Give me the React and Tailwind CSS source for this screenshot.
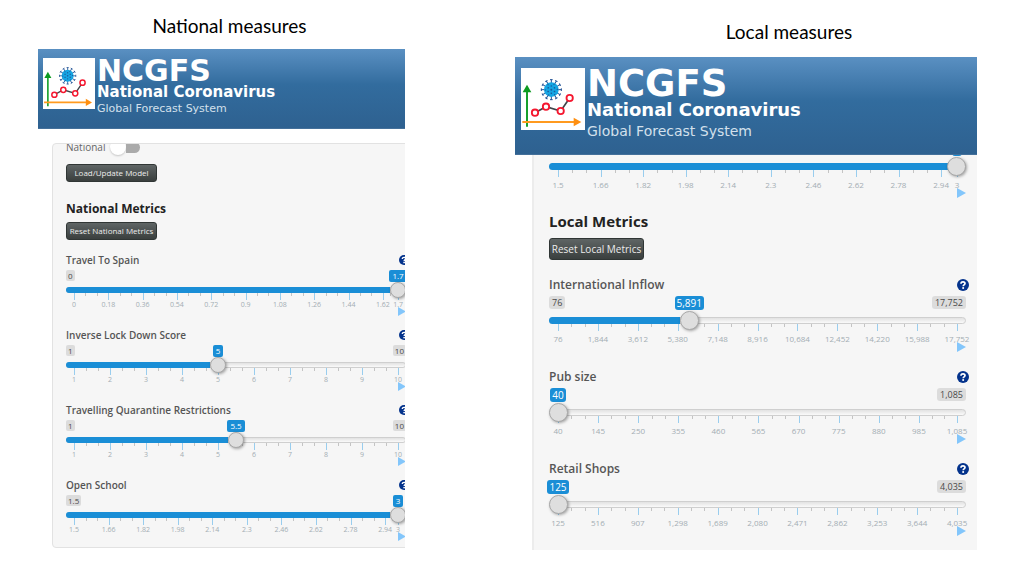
import { useId, useState } from "react";

const SIZES = {
  sm: {
    titleRow: "pt-[14px] pb-[11px]",
    header: "h-[80px] pt-[9px] pl-[5px]",
    logo: "h-[51px] w-[52px]",
    brandGap: "pt-px pl-[2px]",
    brand: "text-[30px] leading-[24px]",
    brand2: "text-[15px] leading-[18px]",
    brand3: "text-[11px] leading-[16px]",
    heading: "text-[12px] leading-[18px]",
    button: "h-[18px] w-[91px] text-[8px]",
    label: "text-[10px] leading-[16px]",
    help: "h-[10px] w-[10px]",
    bubbles: "mt-[2px] h-[12px]",
    bubble: "h-[11px] px-[2px] text-[8px] leading-[11px] rounded-[2px]",
    value: "h-[12px] px-[3px] text-[8px] leading-[12px] rounded-[2px]",
    rail: "h-[16px]",
    track: "h-[6px]",
    inset: "px-[8px]",
    fillInset: "pr-[16px]",
    thumb:
      "[&::-webkit-slider-thumb]:h-[16px] [&::-webkit-slider-thumb]:w-[16px]",
    scale: "-mt-[5px]",
    major: "h-[7px]",
    minor: "h-[3px]",
    tickText: "text-[7px] leading-[10px]",
    play: "-mt-[3px] h-[9px] w-[8px]",
  },
  lg: {
    titleRow: "pt-[20px] pb-[13px]",
    header: "h-[98px] pt-[11px] pl-[6px]",
    logo: "h-[62px] w-[64px]",
    brandGap: "pt-px pl-[2px]",
    brand: "text-[37px] leading-[30px]",
    brand2: "text-[18px] leading-[22px]",
    brand3: "text-[14px] leading-[20px]",
    heading: "text-[15px] leading-[20px]",
    button: "h-[22px] w-[95px] text-[10px]",
    label: "text-[12px] leading-[18px]",
    help: "h-[12px] w-[12px]",
    bubbles: "mt-[2px] h-[14px]",
    bubble: "h-[13px] px-[3px] text-[9px] leading-[13px] rounded-[3px]",
    value: "h-[14px] px-[2px] text-[10px] leading-[14px] rounded-[3px]",
    rail: "h-[20px]",
    track: "h-[7px]",
    inset: "px-[9px]",
    fillInset: "pr-[18px]",
    thumb:
      "[&::-webkit-slider-thumb]:h-[19px] [&::-webkit-slider-thumb]:w-[19px]",
    scale: "-mt-[6px]",
    major: "h-[7px] mb-[2px]",
    minor: "h-[3px]",
    tickText: "text-[8px] leading-[12px]",
    play: "-mt-[3px] h-[10px] w-[9px]",
  },
};

const format = (n) =>
  n.toLocaleString("en-US", { maximumFractionDigits: 2 });

function Logo({ className }) {
  const spikes = Array.from({ length: 12 }, (_, i) => i * 30);
  return (
    <svg viewBox="0 0 192 186" preserveAspectRatio="none" className={className} aria-hidden="true">
      <rect width="192" height="186" fill="#fff" />
      <path d="M18 176V66" stroke="#16a02c" strokeWidth="6" />
      <path d="M18 50 31 73H5z" fill="#0c9a20" />
      <path d="M4 162H162" stroke="#ff9a1f" strokeWidth="6" />
      <path d="M181 162 158 149V175z" fill="#ff8f10" />
      <g stroke="#1d4f93" strokeWidth="3">
        {spikes.map((a) => (
          <g key={a} transform={`rotate(${a} 91 65)`}>
            <path d="M91 47V35M87 35H95" />
          </g>
        ))}
      </g>
      <circle cx="91" cy="65" r="22" fill="#14a5e3" />
      <g fill="#1c5c9e">
        {[0, 60, 120, 180, 240, 300].map((a) => (
          <g key={a} transform={`rotate(${a} 91 65)`}>
            <circle cx="91" cy="54" r="2.5" />
            <circle cx="99" cy="49" r="2" />
          </g>
        ))}
        <circle cx="91" cy="65" r="3" />
      </g>
      <path d="M42 134 75 116 119 129 146 90" fill="none" stroke="#3f454a" strokeWidth="5" />
      <g fill="#fff" stroke="#f5172f" strokeWidth="5.5">
        <circle cx="42" cy="134" r="9.5" />
        <circle cx="75" cy="116" r="9.5" />
        <circle cx="119" cy="129" r="9.5" />
        <circle cx="146" cy="90" r="9.5" />
      </g>
    </svg>
  );
}

function Header({ size }) {
  const s = SIZES[size];
  return (
    <header
      className={`relative z-10 flex items-start border-b border-[#44709a] bg-linear-to-b from-[#5a90c2] via-[#326c9e] via-45% to-[#2e6190] font-['DejaVu_Sans',sans-serif] text-white ${s.header}`}
    >
      <Logo className={`shrink-0 ${s.logo}`} />
      <div className={`whitespace-nowrap ${s.brandGap}`}>
        <div className={`font-bold ${s.brand}`}>NCGFS</div>
        <div className={`font-bold ${s.brand2}`}>National Coronavirus</div>
        <div className={`text-[#d3e0ec] ${s.brand3}`}>Global Forecast System</div>
      </div>
    </header>
  );
}

function HelpIcon({ className }) {
  return (
    <svg viewBox="0 0 24 24" className={className} aria-hidden="true">
      <circle cx="12" cy="12" r="12" fill="#04338c" />
      <path d="M8 9.3C8 6.8 9.7 5.6 12 5.6s4 1.3 4 3.4c0 2.7-3.6 2.8-3.6 5.3" fill="none" stroke="#fff" strokeWidth="3.4" />
      <circle cx="12.3" cy="18" r="2.1" fill="#fff" />
    </svg>
  );
}

function ActionButton({ size, children }) {
  return (
    <button
      type="button"
      className={`block rounded-[3px] border border-[#303635] bg-linear-to-b from-[#5f6565] to-[#3a3f3e] text-center leading-none whitespace-nowrap text-[#ececec] ${SIZES[size].button}`}
    >
      {children}
    </button>
  );
}

function SectionHeading({ size, children }) {
  return <h2 className={`font-bold text-[#222] ${SIZES[size].heading}`}>{children}</h2>;
}

function Scale({ size, ticks }) {
  const s = SIZES[size];
  const full = ticks[1] - ticks[0];
  return (
    <div className={`flex ${s.scale} ${s.inset}`} aria-hidden="true">
      {ticks.map((tick, i) => {
        const last = i === ticks.length - 1;
        const span = last ? 0 : ticks[i + 1] - tick;
        const parts = last ? 0 : span < full * 0.6 ? 2 : 3;
        return (
          <div key={tick} className="min-w-0" style={{ flex: `${span} 0 0px` }}>
            <div className={`flex ${s.major}`}>
              <div className="-mr-px w-px shrink-0 bg-[#99cdee]" />
              {Array.from({ length: parts }, (_, k) => (
                <div key={k} className="flex flex-1">
                  {k > 0 && <div className={`w-px bg-[#c4c4c4] ${s.minor}`} />}
                </div>
              ))}
            </div>
            <div className={`flex w-0 justify-center text-[#a3adb3] ${s.tickText}`}>
              <span>{format(tick)}</span>
            </div>
          </div>
        );
      })}
    </div>
  );
}

function MetricSlider({ size, label, min, max, initial, ticks }) {
  const s = SIZES[size];
  const id = useId();
  const [value, setValue] = useState(initial);
  const ratio = ((value - min) / (max - min)) * 100;
  return (
    <div>
      <div className="flex items-center justify-between">
        <label htmlFor={id} className={`font-semibold whitespace-nowrap text-[#555] ${s.label}`}>
          {label}
        </label>
        <button type="button" aria-label={`About ${label}`} className="-mr-[3px]">
          <HelpIcon className={s.help} />
        </button>
      </div>
      <div className={`grid ${s.bubbles}`}>
        <div className="col-start-1 row-start-1 flex justify-between text-[#4a4a4a]">
          <span className={`bg-[#dcdcdc] ${s.bubble} ${ratio < 6 ? "invisible" : ""}`}>{format(min)}</span>
          <span className={`bg-[#dcdcdc] ${s.bubble} ${ratio > 94 ? "invisible" : ""}`}>{format(max)}</span>
        </div>
        <div className={`col-start-1 row-start-1 flex ${s.inset}`}>
          <div className="shrink-0" style={{ width: `${ratio}%` }} />
          <div className="flex w-0 justify-center">
            <output htmlFor={id} className={`bg-[#1a8ed6] text-white ${s.value}`}>
              {format(Math.round(value * 100) / 100)}
            </output>
          </div>
        </div>
      </div>
      <div className={`grid items-center ${s.rail}`}>
        <div
          className={`col-start-1 row-start-1 overflow-hidden rounded-full border border-[#cfcfcf] bg-linear-to-b from-[#e2e2e2] to-[#fafafa] ${s.track}`}
        />
        <div className={`col-start-1 row-start-1 ${s.fillInset}`}>
          <div
            className={`rounded-l-full bg-[#1a8ed6] ${s.track}`}
            style={{ width: `${ratio}%` }}
          />
        </div>
        <input
          id={id}
          type="range"
          min={min}
          max={max}
          step="any"
          value={value}
          onChange={(e) => setValue(Number(e.target.value))}
          className={`z-1 col-start-1 row-start-1 m-0 w-full appearance-none bg-transparent [&::-webkit-slider-thumb]:appearance-none [&::-webkit-slider-thumb]:rounded-full [&::-webkit-slider-thumb]:border [&::-webkit-slider-thumb]:border-[#a9a9a9] [&::-webkit-slider-thumb]:bg-[#dedede] [&::-webkit-slider-thumb]:shadow-[1px_1px_3px_rgba(0,0,0,0.35)] ${s.rail} ${s.thumb}`}
        />
      </div>
      <Scale size={size} ticks={ticks} />
      <div className={`flex justify-end ${s.inset}`}>
        <div className="flex w-0">
          <button type="button" aria-label={`Animate ${label}`} className={`shrink-0 ${s.play}`}>
            <svg viewBox="0 0 9 10" preserveAspectRatio="none" className="h-full w-full" aria-hidden="true">
              <path d="M0 0 9 5 0 10z" fill="#83c6fb" />
            </svg>
          </button>
        </div>
      </div>
    </div>
  );
}

const oneToTen = [1, 2, 3, 4, 5, 6, 7, 8, 9, 10];
const schoolTicks = [1.5, 1.66, 1.82, 1.98, 2.14, 2.3, 2.46, 2.62, 2.78, 2.94, 3];

const nationalMetrics = [
  { label: "Travel To Spain", min: 0, max: 1.7, initial: 1.7, ticks: [0, 0.18, 0.36, 0.54, 0.72, 0.9, 1.08, 1.26, 1.44, 1.62, 1.7] },
  { label: "Inverse Lock Down Score", min: 1, max: 10, initial: 5, ticks: oneToTen },
  { label: "Travelling Quarantine Restrictions", min: 1, max: 10, initial: 5.5, ticks: oneToTen },
  { label: "Open School", min: 1.5, max: 3, initial: 3, ticks: schoolTicks },
];

const localMetrics = [
  { label: "International Inflow", min: 76, max: 17752, initial: 5891, ticks: [76, 1844, 3612, 5380, 7148, 8916, 10684, 12452, 14220, 15988, 17752] },
  { label: "Pub size", min: 40, max: 1085, initial: 40, ticks: [40, 145, 250, 355, 460, 565, 670, 775, 880, 985, 1085] },
  { label: "Retail Shops", min: 125, max: 4035, initial: 125, ticks: [125, 516, 907, 1298, 1689, 2080, 2471, 2862, 3253, 3644, 4035] },
];

function Title({ size, children }) {
  return (
    <h1
      className={`text-center font-['Lato',sans-serif] text-[19px] leading-[24px] text-black ${SIZES[size].titleRow}`}
    >
      {children}
    </h1>
  );
}

function NationalPanel() {
  return (
    <section className="min-w-0">
      <Title size="sm">
        <span className="pl-4">National measures</span>
      </Title>
      <div className="overflow-hidden">
        <Header size="sm" />
        <div className="mt-[14px] -mr-4 ml-[14px] overflow-hidden rounded-[4px] border border-[#e2e2e2] bg-[#f6f6f6] pr-[14px] pb-[6px] pl-[13px]">
          <label className="-mt-[5px] flex h-[16px] items-center gap-[5px] text-[10px] text-[#666]">
            National
            <span className="flex h-[16px] w-[30px] items-center">
              <input type="checkbox" className="peer sr-only" />
              <span className="h-[16px] w-[16px] shrink-0 rounded-full bg-white shadow-[0_1px_2px_rgba(0,0,0,0.2)]" />
              <span className="h-[11px] w-[14px] rounded-r-full bg-[#aaa]" />
            </span>
          </label>
          <div className="mt-[9px] mb-[18px]">
            <ActionButton size="sm">Load/Update Model</ActionButton>
          </div>
          <SectionHeading size="sm">National Metrics</SectionHeading>
          <div className="mt-1 mb-[12px]">
            <ActionButton size="sm">Reset National Metrics</ActionButton>
          </div>
          <div className="flex flex-col gap-[11px]">
            {nationalMetrics.map((m) => (
              <MetricSlider key={m.label} size="sm" {...m} />
            ))}
          </div>
        </div>
      </div>
    </section>
  );
}

function LocalPanel() {
  return (
    <section className="min-w-0">
      <Title size="lg">
        <span className="pl-[86px]">Local measures</span>
      </Title>
      <div className="overflow-hidden">
        <Header size="lg" />
        <div className="-mr-[6px] ml-[17px] overflow-hidden border-l-2 border-[#ececec] bg-[#f6f6f6] pr-[17px] pb-[14px] pl-[15px]">
          <div className="-mt-[33px] mb-[13px]">
            <MetricSlider size="lg" label="Open School" min={1.5} max={3} initial={3} ticks={schoolTicks} />
          </div>
          <SectionHeading size="lg">Local Metrics</SectionHeading>
          <div className="mt-[7px] mb-[16px]">
            <ActionButton size="lg">Reset Local Metrics</ActionButton>
          </div>
          <div className="flex flex-col gap-[16px]">
            {localMetrics.map((m) => (
              <MetricSlider key={m.label} size="lg" {...m} />
            ))}
          </div>
        </div>
      </div>
    </section>
  );
}

export default function App() {
  return (
    <main className="grid min-h-screen grid-cols-[367fr_462fr] items-start gap-[110px] bg-white px-[38px] font-['Open_Sans',sans-serif]">
      <NationalPanel />
      <LocalPanel />
    </main>
  );
}
